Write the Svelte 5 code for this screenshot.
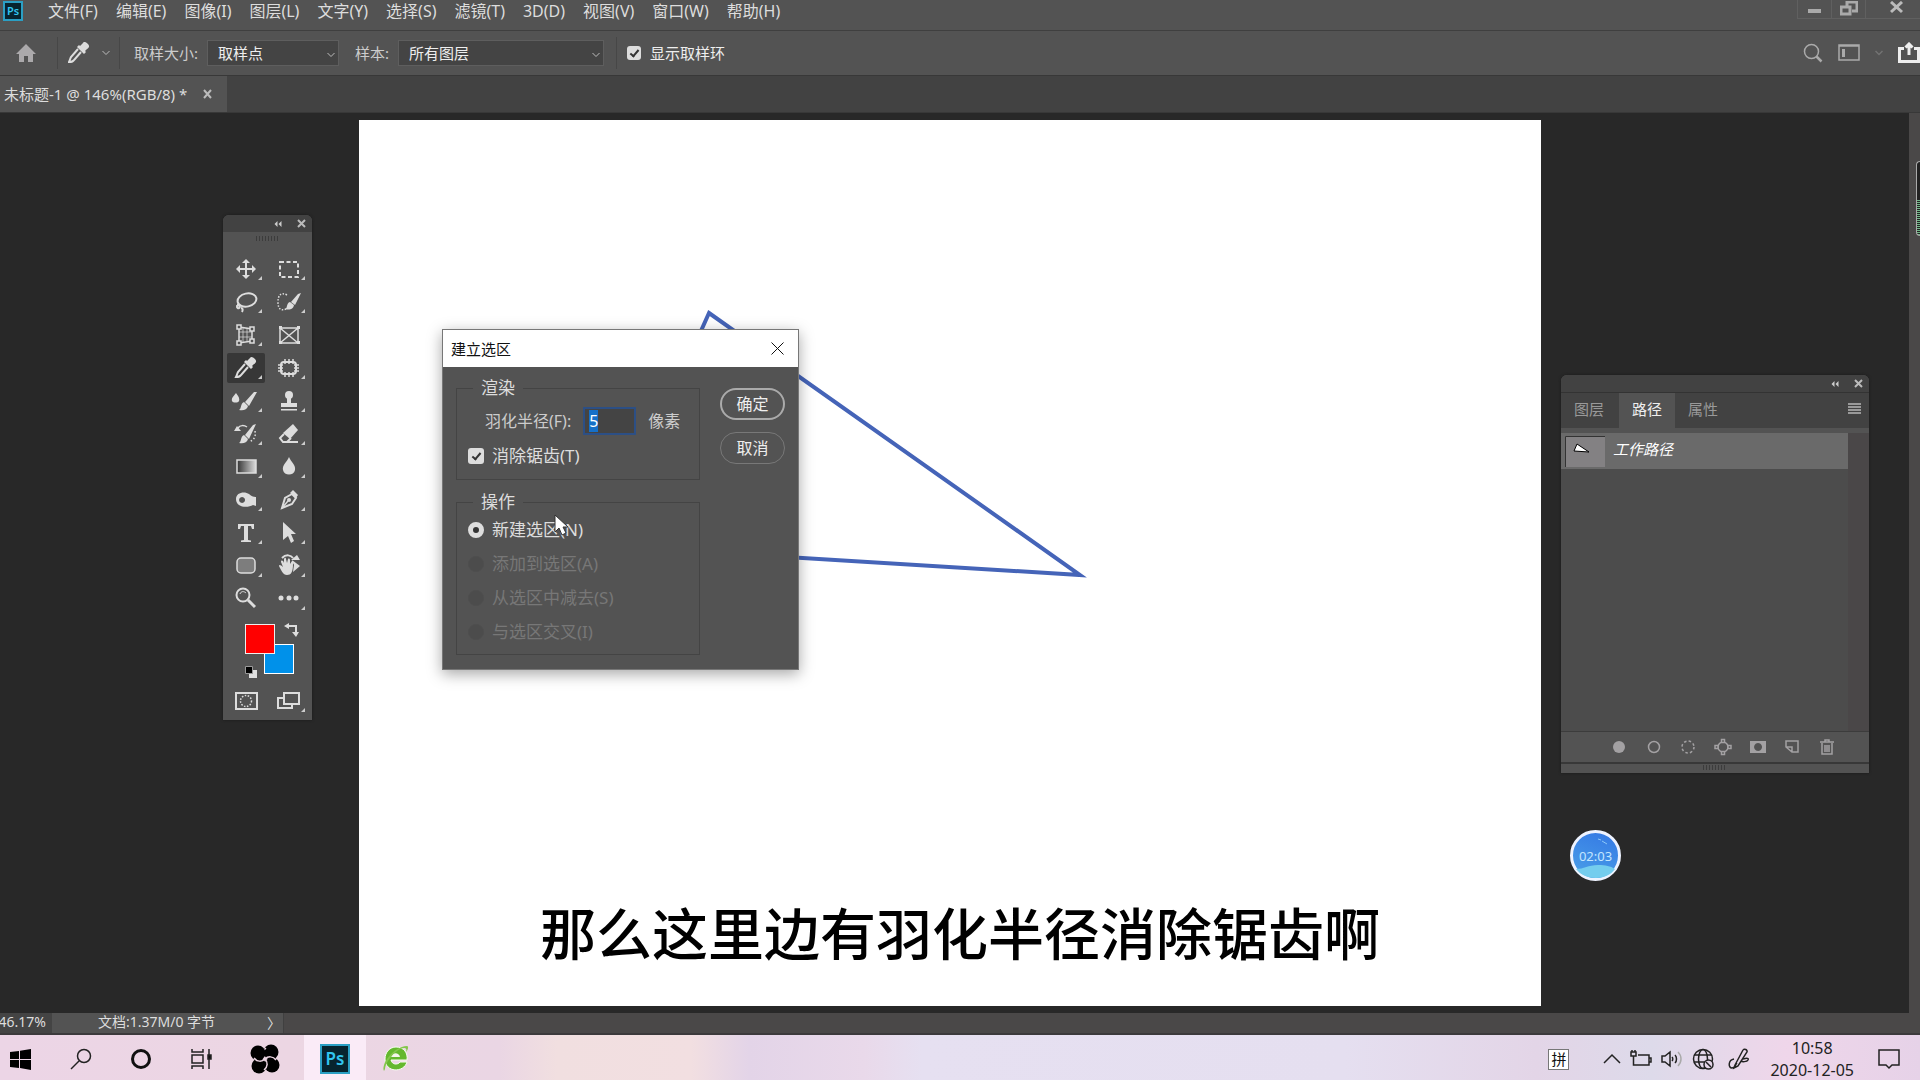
<script lang="ts">
  import { onMount } from 'svelte';

  const menus = ['文件(F)', '编辑(E)', '图像(I)', '图层(L)', '文字(Y)', '选择(S)', '滤镜(T)', '3D(D)', '视图(V)', '窗口(W)', '帮助(H)'];

  // Icons are drawn around 0,0 in a 38x30 box.
  const tools = [
    { name: '移动', more: true, icon: '<path class="f" d="M0-10l4 4H1v5H6V-4l4 4-4 4V1H1V6H4l-4 4-4-4h3V1H-6V4l-4-4 4-4v3h5V-6H-4z"/>' },
    { name: '矩形选框', more: true, icon: '<path class="s2" stroke-dasharray="4 2.500" d="M-9-7H9V8H-9z"/>' },
    { name: '套索', more: true, icon: '<ellipse class="s2" cx="1" cy="-2" rx="9.500" ry="6.500" transform="rotate(-12 1 -2)"/><path class="s2" d="M-8 3c-2 1-1 4 1 3s0-3-2-3M-5 6c2 0 2 2 1 4"/>' },
    { name: '快速选择', more: true, icon: '<path class="s1" stroke-dasharray="1.500 1.500" stroke-width="1.500" d="M-2-7c-6-3-9 0-9 7s3 9 8 7"/><path class="f" d="M12-9L6 3 2 0 9-8zM1 0l4 3c-1 5-5 5-9 4 3-1 1-6 5-7z"/>' },
    { name: '透视裁剪', more: true, icon: '<path class="s1" stroke-width="1.500" d="M-7-8l13 2v12l-13 2z"/><path class="s1" opacity=".7" d="M-3-7v14M1-6v12M-7-3H6M-7 2H6"/><path class="box" d="M-9-10h4v4h-4zM4-8h4v4H4zM4 4h4v4H4zM-9 6h4v4h-4z"/>' },
    { name: '图框', more: false, icon: '<path class="s1" stroke-width="1.500" d="M-9-7H9V8H-9zM-9-7L9 8M9-7L-9 8"/><path class="f" d="M-10-9h3v3h-3zM8-9h3v3H8zM8 6h3v3H8zM-10 6h3v3h-3z"/>' },
    { name: '吸管', more: true, active: true, icon: '<path class="f" d="M9-9c2 2 1 4-1 5L6-2l1 1-2 2-7-7 2-2 1 1 3-3c1-2 3-1 5 1z"/><path class="s2" d="M-1-4L-8 4c-1 2-1 3-2 5 2 0 4 0 5-2L2-1"/>' },
    { name: '修补', more: true, icon: '<rect class="s2" x="-8" y="-6" width="15" height="12" rx="3"/><path class="s1" stroke-width="1.500" d="M-4-9v5M0-9v5M4-9v5M-4 4v5M0 4v5M4 4v5M-11-3h5M-11 0h5M-11 3h5M5-3h5M5 0h5M5 3h5"/>' },
    { name: '混合器画笔', more: true, icon: '<path class="f" d="M-10-8c2 3 4 5 3 8-1 2-6 2-7 0-1-3 2-5 4-8zM11-9L3 5-1 1 8-9zM-2 1l4 4c-1 4-5 5-9 4 3-2 1-6 5-8z"/>' },
    { name: '仿制图章', more: true, icon: '<circle class="f" cx="0" cy="-6" r="4"/><path class="f" d="M-2-4h4v6h6v4H-8V2h6zM-8 8H8v1.500H-8z"/>' },
    { name: '历史记录画笔', more: true, icon: '<path class="f" d="M10-10L3 5-1 1 7-9zM-2 1l4 4c-1 4-5 5-9 4 3-2 1-6 5-8z"/><path class="f" d="M-12-3l3-5 4 5z"/><path class="s1" stroke-width="1.500" d="M-8-6c2-3 6-3 9-1"/><path class="s1" stroke-width="1.500" stroke-dasharray="1.500 2" d="M9-3c1 6-1 9-6 11"/>' },
    { name: '橡皮擦', more: true, icon: '<path class="f" d="M4-10l5 6-8 9-7-6z"/><path class="s2" d="M-5 0l-4 4 3 4h4l4-4M-3 8H9"/>' },
    { name: '渐变', more: true, icon: '<linearGradient id="fade"><stop offset="0" stop-color="#333"/><stop offset="1" stop-color="#ddd"/></linearGradient><rect x="-9" y="-7" width="19" height="13" fill="url(#fade)" stroke="#ddd" stroke-width="1.500"/>' },
    { name: '模糊', more: true, icon: '<path class="f" d="M0-10c2 5 7 8 6 13-1 6-11 6-12 0-1-5 4-8 6-13z"/>' },
    { name: '减淡', more: true, icon: '<path class="f" fill-rule="evenodd" d="M-10-1c0-7 9-8 13-5 2 2 4 3 7 3v9l-3-1C2 8-10 8-10-1zM-4-3a3 3 0 1 0 .1 0z"/>' },
    { name: '钢笔', more: true, icon: '<path class="s2" d="M3-6L-4-2-7 8 3 4 7-2z"/><path class="f" d="M4-10l5 5-2 3-6-5z"/><circle class="f" cx="0" cy="0" r="2"/><path class="s1" stroke-width="1.500" d="M-7 8l6-7"/>' },
    { name: '横排文字', more: true, icon: '<path class="f" d="M-8-9H8v5H6l-1-3H2V7l3 .5V9H-5V7.500L-2 7V-7h-3l-1 3h-2z"/>' },
    { name: '路径选择', more: true, icon: '<path class="f" d="M-6-11L7 1H2l3 7-3 2-3-7-5 4z"/>' },
    { name: '圆角矩形', more: true, icon: '<rect x="-9" y="-8" width="18" height="15" rx="4" fill="#7d7d7d" stroke="#ddd" stroke-width="1.500"/>' },
    { name: '旋转视图', more: true, icon: '<path class="f" d="M-10 0c0-2 2-1 4 1l-2-5c0-2 2-2 3 1v-4c1-2 2-1 2 0l1 4 1-4c1-1 2 0 2 1v4l2-3c2 0 2 1 1 3 0 8-2 11-6 11s-6-5-8-9zM3-6l8 6-7 6 1-7z"/><path class="s2" d="M-7-8c4-4 9-3 11 0"/><path class="f" d="M2-6h9L8-11z"/>' },
    { name: '缩放', more: false, icon: '<circle class="s2" cx="-3" cy="-4" r="6.500"/><path class="s1" d="M-6-5c1-3 4-3 6-1"/><path d="M2 1l7 7" stroke="#ddd" stroke-width="3"/>' },
    { name: '编辑工具栏', more: true, icon: '<circle class="f" cx="-8" cy="-1" r="2.500"/><circle class="f" cx="0" cy="-1" r="2.500"/><circle class="f" cx="7" cy="-1" r="2.500"/>' },
  ];

  const modes = [
    { label: '新建选区(N)', enabled: true },
    { label: '添加到选区(A)', enabled: false },
    { label: '从选区中减去(S)', enabled: false },
    { label: '与选区交叉(I)', enabled: false },
  ];

  const pathActions = [
    { name: '用前景色填充路径', icon: '<circle cx="0" cy="0" r="6" fill="#a3a1a3"/>' },
    { name: '用画笔描边路径', icon: '<circle class="g" cx="0" cy="0" r="5.500"/>' },
    { name: '将路径作为选区载入', icon: '<circle class="g" cx="0" cy="0" r="6" stroke-dasharray="2.500 2.200"/>' },
    { name: '从选区生成工作路径', icon: '<circle class="g" cx="0" cy="0" r="5"/><path class="node" d="M-1.500-7.500h3v3h-3zM-1.500 4.500h3v3h-3zM-8-1.500h3v3h-3zM5-1.500h3v3H5z"/>' },
    { name: '添加蒙版', icon: '<path fill-rule="evenodd" d="M-8-6H8V6H-8zM0-4a4 4 0 1 0 .1 0z" fill="#a3a1a3"/>' },
    { name: '创建新路径', icon: '<path class="g" d="M-6 0v-6H6V5H0zM-6 0h6v5"/>' },
    { name: '删除路径', icon: '<path class="g" d="M-7-5H7M-2-5v-2h4v2M-5-4v11H5V-4M-2-2v7M0-2v7M2-2v7"/>' },
  ];

  let radius = $state('5');
  let antialias = $state(true);
  let showRing = $state(true);
  let mode = $state('新建选区(N)');
  let radiusInput: HTMLInputElement;

  onMount(() => {
    radiusInput.focus();
    radiusInput.select();
  });
</script>

{#snippet chevron()}
  <svg class="chevron" width="8" height="6" viewBox="0 0 8 6"><path d="M.5 1L4 4.500 7.500 1" /></svg>
{/snippet}

{#snippet panelControls()}
  <button class="plain" aria-label="折叠">
    <svg width="8" height="6" viewBox="0 0 8 6"><path d="M3.500 0v6L.5 3zM7.500 0v6l-3-3z" fill="#ccc" /></svg>
  </button>
  <button class="plain" aria-label="关闭面板">
    <svg width="9" height="9" viewBox="0 0 9 9"><path d="M1 1l7 7M8 1L1 8" stroke="#bbb" stroke-width="2" /></svg>
  </button>
{/snippet}

<div class="app">
  <header class="menubar">
    <span class="ps-logo">Ps</span>
    <nav>
      {#each menus as menu}
        <button class="plain">{menu}</button>
      {/each}
    </nav>
    <div class="window-controls">
      <button class="plain" aria-label="最小化"><svg width="14" height="16" viewBox="0 0 14 16"><path d="M0 8h13v4H0z" fill="#aaa" /></svg></button>
      <button class="plain" aria-label="还原"><svg width="18" height="16" viewBox="0 0 18 16"><path d="M7 5V1h10v9h-5M1 6h9v7H1z" fill="none" stroke="#aaa" stroke-width="3" /></svg></button>
      <button class="plain last" aria-label="关闭"><svg width="14" height="16" viewBox="0 0 14 16"><path d="M1 1l11 10M12 1L1 11" stroke="#bbb" stroke-width="3" /></svg></button>
    </div>
  </header>

  <div class="options">
    <button class="plain home" aria-label="主页"><svg width="22" height="20" viewBox="0 0 22 20"><path d="M11 1l10 10h-3v8h-5v-6H9v6H4v-8H1z" fill="#aba9ab" /></svg></button>
    <button class="plain dropper" aria-label="吸管工具">
      <svg class="icon" width="22" height="22" viewBox="-11 -11 22 22">{@html tools[6].icon}</svg>
      {@render chevron()}
    </button>
    <label for="size">取样大小:</label>
    <span class="select size">
      <select id="size"><option>取样点</option></select>
      {@render chevron()}
    </span>
    <label class="sample" for="sample">样本:</label>
    <span class="select layers">
      <select id="sample"><option>所有图层</option></select>
      {@render chevron()}
    </span>
    <label class="ring"><input type="checkbox" bind:checked={showRing} />显示取样环</label>
    <div class="actions">
      <button class="plain" aria-label="搜索"><svg width="20" height="20" viewBox="0 0 20 20"><circle cx="8.500" cy="8.500" r="7" /><path d="M13.500 13.500l5 5" stroke-width="2.500" /></svg></button>
      <button class="plain" aria-label="工作区"><svg width="22" height="18" viewBox="0 0 22 18"><path d="M1 1h20v15H1zM1 2h20" /><path d="M5.500 5v8" stroke-width="3" /></svg></button>
      <button class="plain faint" aria-label="切换工作区">{@render chevron()}</button>
      <button class="plain share" aria-label="共享"><svg width="22" height="22" viewBox="0 0 22 22"><path d="M6 6.500H1.500v13h19v-13H16M11 13V2M7.500 5.500L11 2l3.500 3.500" /></svg></button>
    </div>
  </div>

  <div class="tabs">
    <div class="tab">
      <span>未标题-1 @ 146%(RGB/8) *</span>
      <button class="plain" aria-label="关闭文档"><svg width="10" height="10" viewBox="0 0 10 10"><path d="M1 1l7 8M8 1L1 9" stroke="#bbb" stroke-width="2" /></svg></button>
    </div>
  </div>

  <main class="work">
    <div class="view">
      <div class="canvas">
        <svg width="740" height="470" viewBox="0 0 740 470">
          <path d="M350 193L721 455 246 426z" fill="none" stroke="#4564b8" stroke-width="4" />
        </svg>
      </div>
    </div>
    <div class="scroll"></div>
  </main>

  <footer class="status">
    <div class="zoom"><span>146.17%</span></div>
    <div class="doc"><span>文档:1.37M/0 字节</span><button class="plain" aria-label="状态选项">〉</button></div>
  </footer>

  <section class="toolbox" aria-label="工具">
    <div class="panel-head">{@render panelControls()}</div>
    <div class="grip"></div>
    <div class="tools">
      {#each tools as tool}
        <button class="plain" class:active={tool.active} aria-label={tool.name}>
          <svg class="icon" width="38" height="30" viewBox="-19 -15 38 30">
            {@html tool.icon}
            {#if tool.more}<path d="M16 7v4h-4z" fill="#ccc" />{/if}
          </svg>
        </button>
      {/each}
    </div>
    <svg class="swatches" width="89" height="64" viewBox="0 0 89 64">
      <rect x="41.500" y="24.500" width="29" height="29" fill="#0091ea" stroke="#fff" />
      <rect x="22.500" y="4.500" width="29" height="29" fill="#f00" stroke="#eee" />
      <path d="M66 3v6l-5-3zM69 12h7l-3 5z" fill="#ddd" />
      <path d="M65 6h8v7" fill="none" stroke="#ddd" stroke-width="2" />
      <path d="M26 50h8v8h-8z" fill="#e0e0e0" /><path d="M22.500 46.500h7v7h-7z" fill="#000" stroke="#999" />
    </svg>
    <div class="tools">
      <button class="plain" aria-label="快速蒙版"><svg class="icon" width="38" height="30" viewBox="-19 -15 38 30"><rect class="s1" x="-10" y="-8" width="21" height="16" stroke-width="2" /><circle class="s1" cx="0" cy="0" r="5.500" stroke-width="1.500" stroke-dasharray="1.500 1.500" /></svg></button>
      <button class="plain" aria-label="屏幕模式"><svg class="icon" width="38" height="30" viewBox="-19 -15 38 30"><path class="s2" d="M-5-3h-6V7H3V4M-5-8H10V3H-5z" /><path d="M16 7v4h-4z" fill="#ccc" /></svg></button>
    </div>
  </section>

  <section class="panel" aria-label="路径">
    <div class="panel-head">{@render panelControls()}</div>
    <div class="panel-tabs">
      <button class="plain">图层</button>
      <button class="plain current">路径</button>
      <button class="plain">属性</button>
      <button class="plain menu" aria-label="面板菜单"><svg width="13" height="11" viewBox="0 0 13 11"><path d="M0 1h13M0 4h13M0 7h13M0 10h13" stroke="#999" stroke-width="2" /></svg></button>
    </div>
    <div class="list">
      <div class="path-row">
        <svg width="40" height="31" viewBox="0 0 40 31"><path d="M0 0h40v31H0z" fill="#838183" /><path d="M.5 31V.5H40" fill="none" stroke="#333" /><path d="M12 8l12 8-15-1z" fill="#fff" stroke="#000" /></svg>
        <em>工作路径</em>
      </div>
    </div>
    <div class="panel-foot">
      {#each pathActions as action}
        <button class="plain" aria-label={action.name}><svg class="icon" width="20" height="18" viewBox="-10 -9 20 18">{@html action.icon}</svg></button>
      {/each}
    </div>
    <div class="resize"><div class="grip"></div></div>
  </section>

  <form class="dialog" onsubmit={(e) => e.preventDefault()}>
    <div class="title">
      <span>建立选区</span>
      <button type="button" class="plain" aria-label="关闭对话框"><svg width="13" height="13" viewBox="0 0 13 13"><path d="M.5.5l12 12M12.500.5l-12 12" stroke="#111" /></svg></button>
    </div>
    <div class="body">
      <div class="groups">
        <fieldset class="render">
          <legend>渲染</legend>
          <div class="radius">
            <label for="radius">羽化半径(F):</label>
            <input id="radius" type="text" bind:value={radius} bind:this={radiusInput} />
            <span>像素</span>
          </div>
          <label class="choice"><input type="checkbox" bind:checked={antialias} />消除锯齿(T)</label>
        </fieldset>
        <fieldset class="operation">
          <legend>操作</legend>
          {#each modes as m}
            <label class="choice" class:disabled={!m.enabled}>
              <input type="radio" name="mode" value={m.label} bind:group={mode} disabled={!m.enabled} />{m.label}
            </label>
          {/each}
        </fieldset>
      </div>
      <div class="buttons">
        <button class="primary">确定</button>
        <button type="button">取消</button>
      </div>
    </div>
  </form>

  <svg class="cursor" width="16" height="24" viewBox="0 0 16 24"><path d="M1 1v17l4-4 3 7 4-2-3-6h5z" fill="#fff" stroke="#333" /></svg>
  <div class="meter"></div>
  <div class="timer">
    <svg width="45" height="45" viewBox="0 0 45 45">
      <path d="M3 36c8 0 12-4 22-4 8 0 12 1 17 4-8 12-30 12-39 0z" fill="#74cdee" />
      <path d="M25 6l3 1M29 8l5 3" stroke="#8cc8f8" />
    </svg>
    <span>02:03</span>
  </div>
  <p class="caption">那么这里边有羽化半径消除锯齿啊</p>

  <div class="taskbar">
    <button class="plain" aria-label="开始"><svg width="22" height="22" viewBox="0 0 22 22"><path d="M0 4l9-1v8H0zM10 2.800L21 1v10H10zM0 12h9v8l-9-1zM10 12h11v10l-11-2z" /></svg></button>
    <button class="plain" aria-label="搜索"><svg class="line" width="22" height="22" viewBox="0 0 22 22"><circle cx="14" cy="8" r="6.500" /><path d="M9 13l-8 8" /></svg></button>
    <button class="plain" aria-label="Cortana"><svg width="22" height="22" viewBox="0 0 22 22"><circle cx="11" cy="11" r="8.500" fill="none" stroke="#111" stroke-width="3" /></svg></button>
    <button class="plain" aria-label="任务视图"><svg class="line" width="22" height="22" viewBox="0 0 22 22"><path d="M2 1v3h11V1M2 7h11v8H2zM2 21v-3h11v3M19 1v20" /><path d="M18 7h3v4h-3z" fill="#111" /></svg></button>
    <button class="plain" aria-label="录屏">
      <svg width="30" height="30" viewBox="-15 -15 30 30">
        {#each [0, 90, 180, 270] as turn}
          <g transform="rotate({turn})">
            <circle cx="6" cy="-7" r="7.500" />
            <path d="M0 0c-3-3-3-8 1-11" fill="none" stroke="#ecd5e3" stroke-width="1.500" />
          </g>
        {/each}
      </svg>
    </button>
    <button class="plain running" aria-label="Photoshop"><span class="ps-logo big">Ps</span></button>
    <button class="plain" aria-label="浏览器">
      <svg width="30" height="30" viewBox="0 0 30 30">
        <path d="M15 3c8 0 12 6 11 13H10c1 5 7 5 9 2h7c-3 11-22 11-22-3C4 8 9 3 15 3z" fill="#64b82e" stroke="#f7fff0" />
        <path d="M10 13h9c-1-5-8-5-9 0z" fill="#f4f6ea" />
        <path d="M3 27C0 20 12 3 26 2c2 0 1 4-1 6 1-3 0-4-2-4C15 5 5 17 4 25z" fill="#84c64c" />
      </svg>
    </button>
    <div class="tray">
      <span class="ime">拼</span>
      <svg class="line" width="18" height="22" viewBox="0 0 18 22"><path d="M1 15l8-8 8 8" /></svg>
      <svg class="line" width="22" height="22" viewBox="0 0 22 22"><path d="M6 17h13V7H8M19 10h2v4h-2" /><path d="M1 4h5v4H1zM2 2v2M5 2v2M3.500 8v9H6" /></svg>
      <svg class="line" width="22" height="22" viewBox="0 0 22 22"><path d="M1 8v6h3l5 4V4L4 8zM11 9c1 1 1 3 0 4M14 7c2 2 2 6 0 8" /><path d="M17 4c4 4 4 10 0 14" stroke="#aaa" /></svg>
      <svg class="line" width="22" height="22" viewBox="0 0 22 22"><circle cx="11" cy="11" r="9.500" /><ellipse cx="11" cy="11" rx="4.500" ry="9.500" /><path d="M2 7h18M2 14h11" /><circle cx="16.500" cy="16.500" r="4.500" fill="#e4d5e8" /><path d="M14 14l5 5" /></svg>
      <svg class="line pen" width="22" height="22" viewBox="0 0 22 22"><path d="M7 17L15 2c1-2 5 0 4 2L10 18l-4 2zM6 11c-6 1-6 9-2 9 3 0 3-3 5-5M15 11c4-1 6-1 5 1s-6 2-7 1" /></svg>
      <time><span>10:58</span><span>2020-12-05</span></time>
      <svg class="line" width="22" height="22" viewBox="0 0 22 22"><path d="M1 2h20v15h-7l-3 3-3-3H1z" /></svg>
    </div>
  </div>
</div>

<style>
  :global(body) {
    margin: 0;
    overflow: hidden;
  }
  .app {
    position: relative;
    display: flex;
    flex-direction: column;
    height: 100vh;
    background: #282828;
    color: #ddd;
    font: 15px/20px "Noto Sans", "Noto Sans CJK SC", sans-serif;
    white-space: nowrap;
  }
  .plain {
    display: inline-flex;
    align-items: center;
    justify-content: center;
    padding: 0;
    border: 0;
    background: none;
    color: inherit;
    font: inherit;
  }
  svg { flex: none; }

  .icon :global(.f) { fill: #ddd; }
  .icon :global(.s1) { fill: none; stroke: #ddd; }
  .icon :global(.s2) { fill: none; stroke: #ddd; stroke-width: 2; }
  .icon :global(.box) { fill: #535353; stroke: #ddd; stroke-width: 1.5; }
  .icon :global(.g) { fill: none; stroke: #a3a1a3; stroke-width: 1.5; }
  .icon :global(.node) { fill: #535353; stroke: #a3a1a3; stroke-width: 1.5; }
  .chevron path { fill: none; stroke: #bbb; }

  .menubar {
    display: flex;
    align-items: flex-start;
    height: 30px;
    background: #535353;
    border-bottom: 1px solid #3f3f3f;
  }
  .ps-logo {
    box-sizing: border-box;
    width: 20px;
    height: 20px;
    margin: 1px 0 0 3px;
    border: 2px solid #2b9fc4;
    background: #07242f;
    color: #31c5f0;
    font-size: 11px;
    line-height: 16px;
    font-weight: 600;
    text-align: center;
  }
  nav {
    display: flex;
    gap: 18px;
    margin-left: 25px;
    font-size: 16px;
    line-height: 22px;
  }
  .window-controls {
    display: flex;
    height: 18px;
    margin-left: auto;
    border: 1px solid #606060;
    border-top: 0;
    border-right: 0;
  }
  .window-controls .plain { width: 34px; border-right: 1px solid #606060; }
  .window-controls .last { width: 54px; padding-left: 8px; border: 0; }

  .options {
    display: flex;
    align-items: center;
    height: 44px;
    background: #535353;
    border-bottom: 1px solid #383838;
    color: #ccc;
  }
  .home { width: 52px; height: 32px; margin-right: 5px; }
  .dropper {
    gap: 12px;
    width: 63px;
    height: 32px;
    margin-right: 14px;
    border: 1px solid #474747;
    border-width: 0 1px;
  }
  .select {
    position: relative;
    height: 26px;
    margin-left: 9px;
  }
  .select.size { width: 132px; }
  .select.layers { width: 206px; }
  .select .chevron { position: absolute; right: 4px; top: 12px; }
  select {
    width: 100%;
    height: 100%;
    padding: 0 10px;
    appearance: none;
    border: 1px solid #5e5e5e;
    background: #444;
    color: #eee;
    font: inherit;
  }
  .sample { margin-left: 16px; }
  .ring {
    display: flex;
    align-items: center;
    gap: 9px;
    height: 32px;
    margin-left: 12px;
    padding-left: 10px;
    border-left: 1px solid #474747;
    color: #eee;
  }
  input[type="checkbox"] {
    display: flex;
    flex: none;
    align-items: center;
    justify-content: center;
    width: 14px;
    height: 14px;
    margin: 0;
    appearance: none;
    border-radius: 3px;
    background: #ddd;
  }
  input[type="checkbox"]:checked::after {
    content: "";
    width: 3px;
    height: 7px;
    margin-bottom: 2px;
    border: solid #333;
    border-width: 0 2px 2px 0;
    transform: rotate(40deg);
  }
  .actions {
    display: flex;
    align-items: center;
    gap: 15px;
    margin-left: auto;
  }
  .actions svg { fill: none; stroke: #aaa; stroke-width: 1.5; }
  .actions .faint { opacity: 0.3; }
  .actions .share svg { stroke: #eee; stroke-width: 3; }

  .tabs {
    display: flex;
    height: 36px;
    background: #424242;
    border-bottom: 1px solid #383838;
  }
  .tab {
    display: flex;
    align-items: center;
    gap: 16px;
    padding: 0 14px 0 4px;
    background: #535353;
  }

  .work { display: flex; flex: 1; }
  .view { display: flex; flex: 1; padding: 7px 368px 7px 359px; }
  .canvas { flex: 1; overflow: hidden; background: #fff; }
  .scroll { width: 11px; background: #4a4848; }

  .status {
    display: flex;
    height: 20px;
    background: #4a4848;
    border-bottom: 2px solid #3c3a3c;
    line-height: 18px;
  }
  .zoom {
    display: flex;
    justify-content: flex-end;
    width: 46px;
    padding-right: 6px;
    overflow: hidden;
    background: #444;
    font-size: 14px;
  }
  .doc {
    display: flex;
    justify-content: space-between;
    width: 181px;
    padding: 0 4px 0 46px;
    background: #535353;
    border-right: 1px solid #404040;
    font-size: 14px;
  }
  .doc .plain { width: 12px; justify-content: flex-start; }

  .toolbox, .panel {
    position: absolute;
    border-radius: 6px 6px 0 0;
    background: #535353;
    box-shadow: 0 0 3px #1a1a1a;
  }
  .toolbox { left: 223px; top: 215px; width: 89px; height: 505px; }
  .panel-head {
    display: flex;
    align-items: center;
    justify-content: flex-end;
    gap: 15px;
    height: 17px;
    padding-right: 6px;
    border-radius: 6px 6px 0 0;
    background: #424242;
  }
  .grip {
    width: 24px;
    height: 5px;
    margin: 4px auto 0;
    background: repeating-linear-gradient(90deg, #3c3c3c 0 1px, transparent 1px 3px);
  }
  .tools {
    display: grid;
    grid-template-columns: 38px 38px;
    gap: 3px 5px;
    margin: 13px 0 0 4px;
  }
  .tools .plain { height: 30px; border-radius: 2px; }
  .tools .active { background: #373737; }
  .swatches { display: block; margin-top: 6px; }
  .swatches + .tools { margin-top: 2px; }

  .panel { right: 51px; top: 375px; width: 308px; }
  .panel-tabs {
    display: flex;
    height: 35px;
    border-top: 1px solid #333;
    background: #424242;
    color: #999;
  }
  .panel-tabs .plain { width: 56px; padding-bottom: 4px; }
  .panel-tabs .plain:first-child { width: 58px; padding-right: 2px; }
  .panel-tabs .current { background: #535353; color: #eee; }
  .panel-tabs .menu { width: 13px; margin: 0 8px 0 auto; }
  .list {
    height: 298px;
    margin-top: 5px;
    background: #4c4c4c;
    border-right: 21px solid #4a4748;
  }
  .path-row {
    display: flex;
    align-items: center;
    gap: 8px;
    height: 36px;
    padding-left: 4px;
    background: #6a6a6a;
    color: #fff;
  }
  .path-row em { padding-bottom: 4px; }
  .panel-foot {
    display: flex;
    justify-content: space-between;
    height: 30px;
    padding: 0 32px 0 48px;
    border-top: 1px solid #3c3c3c;
  }
  .resize {
    display: flex;
    height: 9px;
    border-top: 2px solid #383838;
  }
  .resize .grip { margin-top: 1px; }

  .dialog {
    position: absolute;
    left: 442px;
    top: 329px;
    width: 355px;
    border: 1px solid #777;
    background: #535353;
    box-shadow: 0 4px 14px rgba(0, 0, 0, 0.35);
    font-size: 17px;
  }
  .title {
    display: flex;
    align-items: center;
    justify-content: space-between;
    height: 37px;
    padding: 0 14px 0 8px;
    background: #fff;
    color: #111;
    font-size: 15px;
  }
  .body {
    display: flex;
    justify-content: space-between;
    padding: 11px 13px 14px;
  }
  .groups { display: grid; gap: 12px; width: 244px; }
  fieldset {
    box-sizing: border-box;
    min-width: 0;
    margin: 0;
    padding: 0 11px;
    border: 1px solid #444;
  }
  .render { height: 102px; padding-top: 9px; }
  .operation { height: 163px; padding-top: 1px; }
  legend { margin-left: 5px; padding: 0 8px; }
  .radius {
    display: flex;
    align-items: center;
    gap: 12px;
    margin: 0 0 9px 17px;
    color: #ccc;
    font-size: 16px;
  }
  .radius input {
    box-sizing: border-box;
    width: 53px;
    height: 28px;
    padding: 0 4px;
    border: 2px solid #2c4f85;
    outline: 0;
    background: #444;
    color: #fff;
    font: inherit;
  }
  .radius input::selection { background: #1670c8; color: #fff; }
  .choice {
    display: flex;
    align-items: center;
    gap: 8px;
    height: 24px;
  }
  .operation .choice { height: 34px; }
  .choice.disabled { color: #777; }
  .choice input[type="checkbox"] { width: 16px; height: 16px; }
  .choice input[type="radio"] {
    box-sizing: border-box;
    width: 16px;
    height: 16px;
    margin: 0;
    appearance: none;
    border: 5px solid #ddd;
    border-radius: 50%;
    background: #333;
  }
  .choice input[type="radio"]:disabled { border: 1px solid #4e4e4e; background: #4c4c4c; }
  .buttons {
    display: flex;
    flex-direction: column;
    gap: 12px;
    margin-top: 10px;
  }
  .buttons button {
    width: 65px;
    height: 32px;
    padding: 0;
    border: 1px solid #787878;
    border-radius: 16px;
    background: #535353;
    color: #eee;
    font: inherit;
    font-size: 16px;
  }
  .buttons .primary { border: 2px solid #aaa; }

  .cursor { position: absolute; left: 554px; top: 514px; }
  .meter {
    position: absolute;
    right: 0;
    top: 161px;
    width: 3px;
    height: 73px;
    border: 1px solid #aaa;
    border-right: 0;
    border-radius: 5px 0 0 5px;
    background:
      repeating-linear-gradient(transparent 0 1px, #222 1px 2px),
      linear-gradient(#222 52%, #6fb886 52%);
  }
  .timer {
    position: absolute;
    right: 299px;
    top: 830px;
    display: grid;
    place-items: center;
    width: 45px;
    height: 45px;
    border: 3px solid #eef3ff;
    border-radius: 50%;
    background: linear-gradient(200deg, #3478e4, #4aa0e8);
    color: #c4e6ff;
    font-size: 13px;
  }
  .timer > * { grid-area: 1 / 1; }
  .timer > span { z-index: 1; }
  .caption {
    position: absolute;
    left: 0;
    right: 0;
    bottom: 114px;
    margin: 0;
    color: #000;
    font: 500 56px/70px "Noto Sans CJK SC", sans-serif;
    text-align: center;
  }

  .taskbar {
    display: flex;
    align-items: stretch;
    height: 45px;
    background: linear-gradient(90deg, #ecd5e6, #ecd6e3 15%, #ead6e4 26%, #f1dfe0 29%, #f2dfe1 36%, #e3d4e8 39%, #e9d9ea 45%, #e6e0f1 48%, #e5dff0 70%, #e3d5e7 80%, #dddaea 86%, #efd6ea 93%, #e6d2e8);
    color: #222;
  }
  .taskbar > .plain { width: 60px; padding-top: 3px; }
  .taskbar > .plain:first-child { width: 42px; margin-right: 9px; }
  .taskbar > .plain:nth-child(5) { width: 73px; padding-right: 6px; box-sizing: border-box; }
  .taskbar > .plain.running { width: 62px; background: #faebf7; }
  .ps-logo.big { width: 30px; height: 30px; margin: 0; font-size: 17px; line-height: 25px; }
  .line { fill: none; stroke: #222; stroke-width: 1.5; }
  .tray {
    display: flex;
    align-items: center;
    gap: 9px;
    margin-left: auto;
    padding: 3px 20px 0 0;
  }
  .ime {
    width: 19px;
    height: 19px;
    margin-right: 25px;
    border: 1px solid #777;
    background: #fff;
    color: #111;
    line-height: 18px;
    text-align: center;
  }
  .pen { margin: 0 11px 0 5px; }
  time {
    display: flex;
    flex-direction: column;
    margin-right: 15px;
    font-size: 16px;
    line-height: 22px;
    text-align: center;
  }
</style>
